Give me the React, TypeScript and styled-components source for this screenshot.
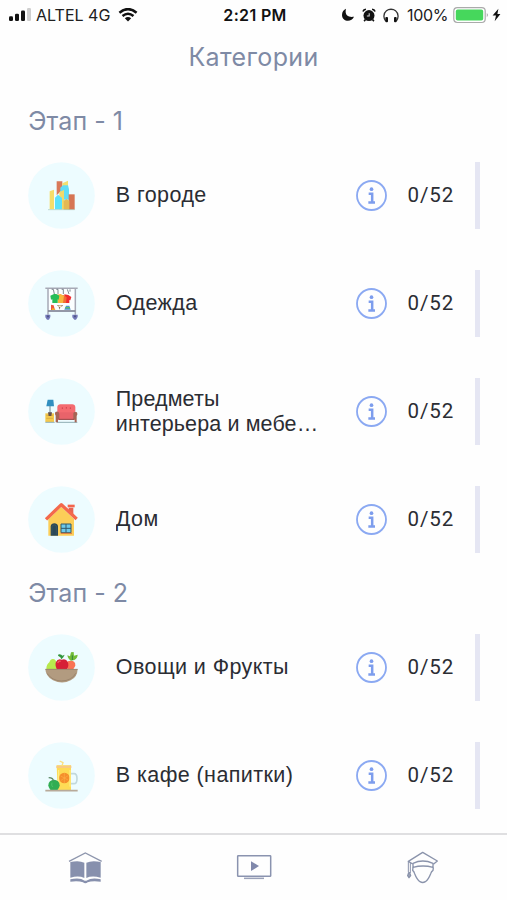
import React from "react";
import styled, { createGlobalStyle } from "styled-components";

const GlobalStyle = createGlobalStyle`
  * { box-sizing: border-box; }
  body { margin: 0; background: #fefefe; }
`;

const Screen = styled.div`
  width: 507px;
  height: 900px;
  display: flex;
  flex-direction: column;
  overflow: hidden;
  background: #fefefe;
  font-family: "Liberation Sans", Arial, sans-serif;
  color: #2b2d33;
`;

const StatusBar = styled.header`
  height: 30px;
  flex: none;
  display: grid;
  grid-template-columns: 1fr auto 1fr;
  align-items: center;
  padding: 0 5px 0 8px;
  font-family: Inter, sans-serif;
  font-size: 16px;
  line-height: 30px;
  color: #202020;
`;

const StatusGroup = styled.div<{ $end?: boolean }>`
  display: flex;
  align-items: center;
  justify-content: ${(p) => (p.$end ? "flex-end" : "flex-start")};
  white-space: nowrap;
  svg { display: block; flex: none; }
`;

const Carrier = styled.span`
  width: 75px;
  margin: 0 7px 0 4px;
  letter-spacing: 0;
`;

const Clock = styled.span`
  font-weight: 600;
  font-size: 16px;
  letter-spacing: 0.35px;
  color: #111;
`;

const Percent = styled.span`
  width: 42px;
  margin: 0 4px 0 8px;
  letter-spacing: -0.35px;
`;

const Title = styled.h1`
  flex: none;
  height: 54px;
  margin: 0;
  text-align: center;
  font: 400 25px/54px Inter, sans-serif;
  letter-spacing: 0.35px;
  color: #7e8aa5;
`;

const List = styled.main`
  flex: 1;
  min-height: 0;
  padding: 0 27px 0 28.3px;
`;

const StageTitle = styled.h2`
  height: 78px;
  margin: 0;
  font: 400 25px/75px Inter, sans-serif;
  letter-spacing: 0.05px;
  color: #7e8aa5;
`;

const Rows = styled.div`
  display: grid;
  grid-auto-rows: 67px;
  row-gap: 41px;
  margin-bottom: 3px;
`;

const Row = styled.div`
  display: grid;
  grid-template-columns: 67px 206px 1fr 47px 5px;
  align-items: center;
  column-gap: 20.5px;
`;

const Picture = styled.svg`
  display: block;
  width: 67px;
  height: 67px;
`;

const Name = styled.div<{ $long?: boolean }>`
  font-size: 21.5px;
  line-height: 25px;
  letter-spacing: ${(p) => (p.$long ? "0.12px" : "0.42px")};
  max-height: 50px;
  overflow: hidden;
  display: -webkit-box;
  -webkit-box-orient: vertical;
  -webkit-line-clamp: 2;
`;

const InfoButton = styled.button`
  justify-self: end;
  width: 31px;
  height: 31px;
  padding: 0;
  border: 0;
  background: none;
  svg { display: block; }
`;

const Count = styled.span`
  padding-bottom: 1px;
  font: 400 20.5px/24px Roboto, sans-serif;
  letter-spacing: 0.9px;
  white-space: nowrap;
`;

const Progress = styled.div`
  height: 67px;
  background: #e5e6f3;
`;

const TabBar = styled.nav`
  flex: none;
  height: 67px;
  display: grid;
  grid-template-columns: repeat(3, 1fr);
  justify-items: center;
  border-top: 2px solid #dfdfe1;
  padding: 13.5px 0 0 1px;
`;

const Tab = styled.a`
  display: block;
  height: 37px;
  svg { display: block; }
`;

const Disc = ({ children }: { children: React.ReactNode }) => (
  <Picture viewBox="25 35 201 201">
    <circle cx="125.5" cy="135.5" r="100" fill="#edfcff" />
    {children}
  </Picture>
);

const CityIcon = () => (
  <Disc>
    <path d="M90 123l13-5v59H90z" fill="#f5dd6b" />
    <path d="M111 93h17v25l-17 17z" fill="#d9795a" />
    <path d="M128 99l17-8v18h-17z" fill="#f3df70" />
    <path d="M122 112l8-7h15l3 12v31h-26z" fill="#62dcf5" />
    <path d="M119 125l14-6v58h-14z" fill="#f1d969" />
    <path d="M106 142l9-9 12 10v34h-21z" fill="#5ce1fb" />
    <path d="M147 132h18v46h-18z" fill="#d67554" />
    <path d="M132 151l8-5 9 5v27h-17z" fill="#e5b954" />
    <path d="M85 178h80" stroke="#a3c9bd" strokeWidth="2" />
  </Disc>
);

const ClothesIcon = () => (
  <Disc>
    <path d="M84 91h84v68H84z" fill="#fbfeff" />
    <path d="M77 90h97M85 91v78M167 91v78" stroke="#a7a9b6" strokeWidth="4.5" fill="none" />
    <path d="M85 158h82" stroke="#7f8496" strokeWidth="5" />
    <path d="M96 93h5l3 14M110 93h5v14M126 93h5v14M143 93l5 14M151 93v7" stroke="#657078" strokeWidth="2.5" fill="none" />
    <path d="M134 108l12 2 9 6-3 10-3-1v9h-15z" fill="#f02b2e" />
    <path d="M121 109l12 2 8 6-2 17h-19z" fill="#f26d34" />
    <path d="M112 109l11-2 10 6-3 21h-16z" fill="#f8b63d" />
    <path d="M92 112l11-5h7l9 5-2 12-3-1v11H98v-11l-4 1z" fill="#26bd58" />
    <path d="M94 139l8 2 4 14H94z" fill="#ed583b" />
    <path d="M99 148l9 7H96z" fill="#edb32c" />
    <path d="M112 140h18l-4 6h-4l-2 8-3-8z" fill="#886c55" />
    <path d="M116 141h10v5h-10z" fill="#f9e3bd" />
    <path d="M134 154l5-12h10l4 12z" fill="#4c96ce" />
    <path d="M137 148h14" stroke="#60bd69" strokeWidth="4" />
    <path d="M77 169h15v7l-4 8h-6l-5-7zM158 169h16v7l-5 8h-5l-6-7z" fill="#7378b8" />
    <path d="M83 174h4M164 174h4" stroke="#3e4270" strokeWidth="5" />
  </Disc>
);

const FurnitureIcon = () => (
  <Disc>
    <path d="M91 118v22" stroke="#6c8790" strokeWidth="3" />
    <path d="M84 100h17l2 20H80z" fill="#318fc0" />
    <path d="M77 141h26v26H77z" fill="#f4c94d" />
    <path d="M80 147h20M80 156h20" stroke="#d2a23f" strokeWidth="2" />
    <path d="M85 138h12l-2 11h-8z" fill="#62504c" />
    <path d="M77 168h28M111 168h62" stroke="#90aeb4" strokeWidth="3" />
    <path d="M113 122q1-8 9-8h36q8 0 9 8v30h-54z" fill="#f46b70" />
    <path d="M115 138h51v23h-51z" fill="#e9636a" />
    <path d="M128 123v5M140 122v5M152 123v5" stroke="#cf454e" strokeWidth="3" />
    <path d="M107 137q10-4 12 5v17h-4v9h-7v-20q-4-4-1-11zM161 141q2-6 11-3 3 6-1 11v19h-6v-9h-4z" fill="#a56455" />
    <path d="M118 159h45" stroke="#934c4c" strokeWidth="3" />
  </Disc>
);

const HouseIcon = () => (
  <Disc>
    <path d="M86 135l39-37 38 36v50H86z" fill="#fcce58" />
    <path d="M147 100h14v25l-14-10z" fill="#e76352" />
    <path d="M144 91h21v8h-21z" fill="#f4654c" />
    <path d="M79 135l46-44 46 43" fill="none" stroke="#f4694c" strokeWidth="10" strokeLinejoin="round" />
    <path d="M93 184v-29q2-8 11-8t11 8v29z" fill="#2b4857" />
    <path d="M97 181v-26q7-7 13 0v26" fill="none" stroke="#47616b" strokeWidth="1.5" />
    <path d="M124 149h30v26h-30z" fill="#6dc8e9" stroke="#315a6d" strokeWidth="3" />
    <path d="M139 149v26M124 162h30" stroke="#315a6d" strokeWidth="3" />
    <path d="M123 177h34" stroke="#db743f" strokeWidth="3" />
  </Disc>
);

const ProduceIcon = () => (
  <Disc>
    <path d="M80 140q0-14 9-20 5-13 15-9 8 4 9 29z" fill="#b7e94d" />
    <path d="M141 122q1-7 12-7 15 0 14 15l-7 12h-16z" fill="#fa7454" />
    <path d="M109 119q5-11 17-7 14-4 18 7 5 9-2 23h-30q-7-14-3-23z" fill="#d61f36" />
    <path d="M114 122q3-7 9-5" stroke="#f35c66" strokeWidth="4" fill="none" />
    <path d="M125 111q-1-8-10-11 0-6 10-3l3 3 7-3-4 8z" fill="#32953d" />
    <path d="M154 115q-9-4-11-16l8 3 3-12 8-1 1 11 11-3q0 10-10 16z" fill="#72bc38" />
    <path d="M158 113v-14" stroke="#31823c" strokeWidth="3" />
    <path d="M77 140h97q-1 25-21 34-25 13-53 0-22-12-23-34z" fill="#b29b80" />
    <path d="M77 141h97M82 153q15 22 43 23 32-1 43-23" fill="none" stroke="#907a63" strokeWidth="2" />
  </Disc>
);

const DrinkIcon = () => (
  <Disc>
    <path d="M153 130h10q9 0 9 15t-9 15h-10" fill="none" stroke="#c2d9dd" strokeWidth="5" />
    <path d="M111 105h43v75h-40z" fill="#fedb55" />
    <path d="M110 106h45v7h-45z" fill="#f8ca82" />
    <path d="M127 106l3-9-10-5" stroke="#fbdf7d" strokeWidth="4" fill="none" />
    <circle cx="134" cy="143" r="16" fill="#f58e2b" />
    <path d="M123 137l22 12M134 128v30M123 151l22-15" stroke="#ffb54c" strokeWidth="1.5" />
    <path d="M117 119v43M151 119v50" stroke="#fff08c" strokeWidth="3" />
    <circle cx="103" cy="165" r="17" fill="#31ad53" />
    <path d="M97 157q-3 8 2 13" stroke="#4bc368" strokeWidth="3" fill="none" />
    <path d="M101 151q0-8-14-9" stroke="#5d8a66" strokeWidth="4" fill="none" />
    <path d="M77 181h97" stroke="#b8aa9a" strokeWidth="5" />
  </Disc>
);

const InfoIcon = () => (
  <svg width="31" height="31" viewBox="0 0 93 93">
    <circle cx="46.5" cy="46.5" r="43.5" fill="none" stroke="#8ba9f2" strokeWidth="5.5" />
    <circle cx="46.5" cy="27.5" r="5.5" fill="#7d9ded" />
    <path d="M38 41.5h10.5v25M37 67.5h20" fill="none" stroke="#7d9ded" strokeWidth="7.5" />
  </svg>
);

const BookIcon = () => (
  <svg width="36.7" height="36.7" viewBox="200 70 110 110">
    <path d="M206 107l49-25 49 25" fill="none" stroke="#8e96ad" strokeWidth="4" />
    <path d="M210 109q26-6 42 2v46q-17-8-42-1zM258 111q17-8 43-2v47q-27-7-43 1z" fill="#8790ad" />
    <path d="M210 161q28-7 43 4h5q17-11 43-4v7q-27-3-39 2-3 3-7 3t-7-3q-13-5-38-2z" fill="#8790ad" />
  </svg>
);

const VideoIcon = () => (
  <svg width="36.7" height="36.7" viewBox="707 70 110 110">
    <rect x="712" y="90" width="99" height="62" rx="2" fill="none" stroke="#8a93af" strokeWidth="4.5" />
    <path d="M731 158h60" stroke="#9aa1b8" strokeWidth="4.5" />
    <path d="M752 107l24 14-24 15z" fill="#8088ab" />
  </svg>
);

const GraduateIcon = () => (
  <svg width="36.7" height="36.7" viewBox="1212 70 110 110">
    <g fill="none" stroke="#8a93ab" strokeWidth="4" strokeLinejoin="round">
      <path d="M1238 115l-13-8 43-27 44 26-12 10" />
      <path d="M1239 125v-12q29-14 60 0v12q-30-8-60 0z" />
      <path d="M1239 125l-1 9q4 3 6 10 7 18 16 24 8 5 16 0 9-6 16-24 2-7 7-10l1-9" />
      <path d="M1225 107v33M1231 112v30" strokeWidth="3" />
      <path d="M1226 141l-3 9 4 6 5-6-3-9z" fill="#a1a8ba" />
    </g>
  </svg>
);

const SignalIcon = () => (
  <svg width="24" height="16" viewBox="0 0 24 16">
    <rect x="1" y="9.2" width="4" height="4.8" rx="1.3" fill="#111" />
    <rect x="7" y="6.8" width="4" height="7.2" rx="1.3" fill="#111" />
    <rect x="13" y="3.6" width="4" height="10.4" rx="1.3" fill="#111" />
    <rect x="19" y="1" width="4" height="13" rx="1.3" fill="#cfcfcf" />
  </svg>
);

const WifiIcon = () => (
  <svg width="20" height="14" viewBox="0 0 20 14">
    <path d="M1.4 4.7q8.6-7.2 17.2 0M4.5 8q5.5-4.6 11 0" fill="none" stroke="#111" strokeWidth="2.5" />
    <path d="M6.8 10.3q3.2-2.4 6.4 0L10 13.4z" fill="#111" />
  </svg>
);

const MoonIcon = () => (
  <svg width="14" height="14" viewBox="0 0 14 14">
    <path d="M5 .8C3.6 6.8 6.4 9.7 13 8.8 10.5 14.9 1 13.8 1 7 1 4 2.8 1.8 5 .8z" fill="#111" />
  </svg>
);

const AlarmIcon = () => (
  <svg width="14" height="14" viewBox="0 0 15 14">
    <circle cx="7.5" cy="7.6" r="5.9" fill="#111" />
    <path d="M1 3.2q.7-2 3.2-2.3M14 3.2q-.7-2-3.2-2.3M3.7 12l-1.5 1.5M11.3 12l1.5 1.5" stroke="#111" strokeWidth="1.7" />
    <path d="M7.7 5v3.1H5.2" fill="none" stroke="#ddd" strokeWidth="1.1" />
  </svg>
);

const HeadphonesIcon = () => (
  <svg width="16" height="15" viewBox="0 0 16 15">
    <path d="M2.7 13Q.6 10.3 1 7.6C2-.9 14-.9 15 7.6q.4 2.7-1.7 5.4" fill="none" stroke="#333" strokeWidth="1.3" />
    <rect x="2.3" y="9" width="2.7" height="5.2" rx="1" fill="#111" />
    <rect x="11" y="9" width="2.7" height="5.2" rx="1" fill="#111" />
  </svg>
);

const BatteryIcon = () => (
  <svg width="49" height="17" viewBox="0 0 49 17">
    <rect x=".8" y=".7" width="31.4" height="14.8" rx="3.4" fill="#fff" stroke="#aaa" strokeWidth="1.2" />
    <rect x="2.8" y="2.6" width="27.4" height="11" rx="1.8" fill="#46d75c" />
    <path d="M33.8 6q2 2 0 4.2z" fill="#999" />
    <path d="M45.4 1.8l-5.8 6.7H43l-1.3 5.8 5.7-7.2h-3z" fill="#111" />
  </svg>
);

interface Category {
  name: string;
  icon: React.ReactNode;
  long?: boolean;
}

const stages: { title: string; items: Category[] }[] = [
  {
    title: "Этап - 1",
    items: [
      { name: "В городе", icon: <CityIcon /> },
      { name: "Одежда", icon: <ClothesIcon /> },
      { name: "Предметы интерьера и мебе…", icon: <FurnitureIcon />, long: true },
      { name: "Дом", icon: <HouseIcon /> },
    ],
  },
  {
    title: "Этап - 2",
    items: [
      { name: "Овощи и Фрукты", icon: <ProduceIcon /> },
      { name: "В кафе (напитки)", icon: <DrinkIcon /> },
    ],
  },
];

const Glyphs = styled.span`
  display: flex;
  align-items: center;
  gap: 7px;
`;

export default function App() {
  return (
    <Screen>
      <GlobalStyle />
      <StatusBar>
        <StatusGroup>
          <SignalIcon />
          <Carrier>ALTEL 4G</Carrier>
          <WifiIcon />
        </StatusGroup>
        <Clock>2:21 PM</Clock>
        <StatusGroup $end>
          <Glyphs>
            <MoonIcon />
            <AlarmIcon />
            <HeadphonesIcon />
          </Glyphs>
          <Percent>100%</Percent>
          <BatteryIcon />
        </StatusGroup>
      </StatusBar>
      <Title>Категории</Title>
      <List>
        {stages.map((stage) => (
          <section key={stage.title}>
            <StageTitle>{stage.title}</StageTitle>
            <Rows>
              {stage.items.map((item) => (
                <Row key={item.name}>
                  {item.icon}
                  <Name $long={item.long}>{item.name}</Name>
                  <InfoButton aria-label="Info">
                    <InfoIcon />
                  </InfoButton>
                  <Count>0/52</Count>
                  <Progress />
                </Row>
              ))}
            </Rows>
          </section>
        ))}
      </List>
      <TabBar>
        <Tab><BookIcon /></Tab>
        <Tab><VideoIcon /></Tab>
        <Tab><GraduateIcon /></Tab>
      </TabBar>
    </Screen>
  );
}
